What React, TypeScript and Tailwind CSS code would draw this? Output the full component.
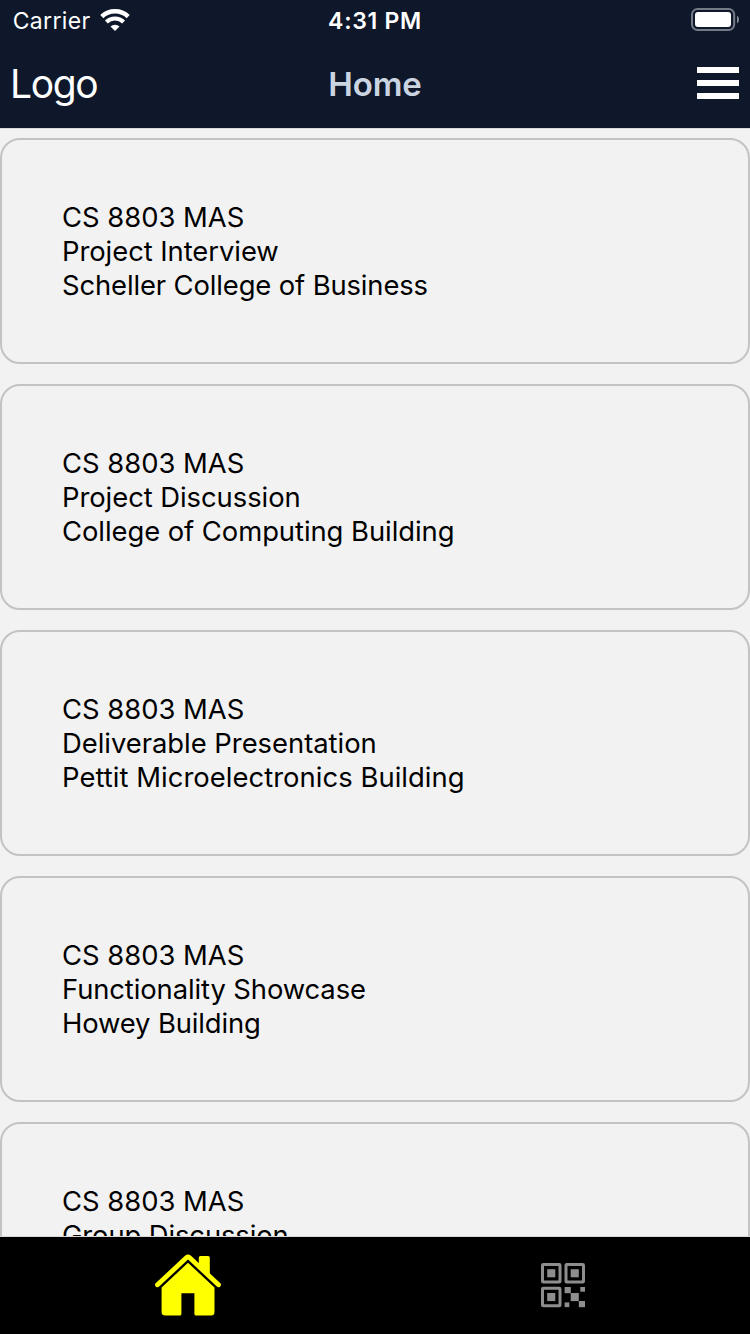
const sessions = [
  { title: 'Project Interview', place: 'Scheller College of Business', ts: 'tracking-[-0.05px]', ps: 'tracking-[-0.12px]' },
  { title: 'Project Discussion', place: 'College of Computing Building', ts: 'tracking-[-0.05px]', ps: 'tracking-[-0.05px]' },
  { title: 'Deliverable Presentation', place: 'Pettit Microelectronics Building', ts: 'tracking-[-0.02px]', ps: 'tracking-[0.05px]' },
  { title: 'Functionality Showcase', place: 'Howey Building', ts: 'tracking-[-0.1px]', ps: 'tracking-[-0.13px]' },
  { title: 'Group Discussion', place: '', ts: 'tracking-[-0.1px]', ps: '' },
];

function WifiIcon() {
  return (
    <svg width="30" height="24" viewBox="0 0 30 24" fill="none" stroke="#fff">
      <path d="M1.8 8.6A19.2 19.2 0 0 1 28.2 8.6" strokeWidth="4.5" />
      <path d="M6.4 14A12.3 12.3 0 0 1 23.6 14" strokeWidth="4.1" />
      <path d="M10.5 18.4A6.7 6.7 0 0 1 19.5 18.4L15 23Z" fill="#fff" stroke="none" />
    </svg>
  );
}

function BatteryIcon() {
  return (
    <svg width="50" height="24" viewBox="0 0 50 24">
      <rect x="2" y="1" width="42.2" height="21" rx="5.5" fill="none" stroke="#757a87" strokeWidth="2" />
      <rect x="5" y="4" width="36" height="15" rx="3" fill="#fff" />
      <path d="M47 7.5Q49 9 49 11.5T47 15.5Z" fill="#878b95" />
    </svg>
  );
}

function HomeIcon() {
  return (
    <svg width="68" height="64" viewBox="154 1253 68 64" fill="#ff0">
      <path d="M157.5 1284.8L186.6 1257.6Q188 1256.4 189.4 1257.6L218.5 1284.8" fill="none" stroke="#ff0" strokeWidth="4.8" strokeLinecap="round" strokeLinejoin="round" />
      <path d="M198.8 1265V1257.8Q198.8 1256 200.6 1256H208Q209.8 1256 209.8 1257.8V1275Z" />
      <path d="M188 1262.8L214.5 1287.4V1312Q214.5 1315.6 211 1315.6H196Q194.4 1315.6 194.4 1314V1293.2H181.4V1314Q181.4 1315.6 179.8 1315.6H165.2Q161.6 1315.6 161.6 1312V1287.4Z" />
    </svg>
  );
}

function QrIcon() {
  return (
    <svg width="46" height="46" viewBox="540 1262 46 46" fill="#8e8e8e">
      <g fill="none" stroke="#8e8e8e" strokeWidth="3">
        <rect x="542.5" y="1264.5" width="17.5" height="17.5" rx="0.8" />
        <rect x="566" y="1264.5" width="17.5" height="17.5" rx="0.8" />
        <rect x="542.5" y="1288.3" width="17.5" height="17.5" rx="0.8" />
      </g>
      <rect x="547.2" y="1269.2" width="8.1" height="8.1" />
      <rect x="570.7" y="1269.2" width="8.1" height="8.1" />
      <rect x="547.2" y="1293" width="8.1" height="8.1" />
      <rect x="564.6" y="1287" width="6.2" height="6.2" />
      <rect x="580.3" y="1287" width="4.7" height="4.7" />
      <rect x="570.7" y="1293" width="8.1" height="8.1" />
      <rect x="564.6" y="1302.4" width="4.7" height="4.7" />
      <rect x="578.8" y="1301" width="6.2" height="6.2" />
    </svg>
  );
}

export default function App() {
  return (
    <div className="flex h-[1334px] w-[750px] flex-col overflow-hidden bg-[#f2f2f2] font-['Inter','Liberation_Sans',sans-serif]">
      <header className="flex h-[129px] shrink-0 flex-col border-b border-[#d8d8d8] bg-[#0f172a] text-white">
        <div className="grid h-10 grid-cols-3 items-center">
          <div className="flex items-center gap-[9px] pl-[12.7px]">
            <span className="pt-[2px] text-[23px] leading-[28px] tracking-[0.35px]">Carrier</span>
            <WifiIcon />
          </div>
          <span className="pt-[2px] text-center text-[23px] leading-[28px] font-semibold tracking-[0.7px]">4:31 PM</span>
          <div className="flex justify-end pr-[10px]">
            <BatteryIcon />
          </div>
        </div>
        <div className="grid h-[88px] grid-cols-3 items-center">
          <span className="mt-5 self-start pl-[10px] text-[39px] leading-[47px] tracking-[-1.4px]">Logo</span>
          <h1 className="text-center text-[33px] leading-[42px] font-semibold tracking-[-0.1px] text-[#cbd5e1]">Home</h1>
          <div className="flex flex-col items-end gap-[7px] pr-[11px] pb-[2px]">
            <span className="h-[6px] w-[42px] bg-white" />
            <span className="h-[6px] w-[42px] bg-white" />
            <span className="h-[6px] w-[42px] bg-white" />
          </div>
        </div>
      </header>
      <main className="flex min-h-0 flex-1 flex-col gap-5 overflow-hidden pt-[9px]">
        {sessions.map((s) => (
          <section key={s.title} className="h-[226px] shrink-0 rounded-[20px] border-2 border-[#c3c3c3] p-[60px] text-[27.4px] leading-[34px] whitespace-nowrap text-black">
            <p>CS 8803 MAS</p>
            <p className={s.ts}>{s.title}</p>
            {s.place && <p className={s.ps}>{s.place}</p>}
          </section>
        ))}
      </main>
      <nav className="grid h-[98px] shrink-0 grid-cols-2 border-t border-[#d8d8d8] bg-black">
        <div className="flex justify-center pt-4"><HomeIcon /></div>
        <div className="flex justify-center pt-[25px]"><QrIcon /></div>
      </nav>
    </div>
  );
}
